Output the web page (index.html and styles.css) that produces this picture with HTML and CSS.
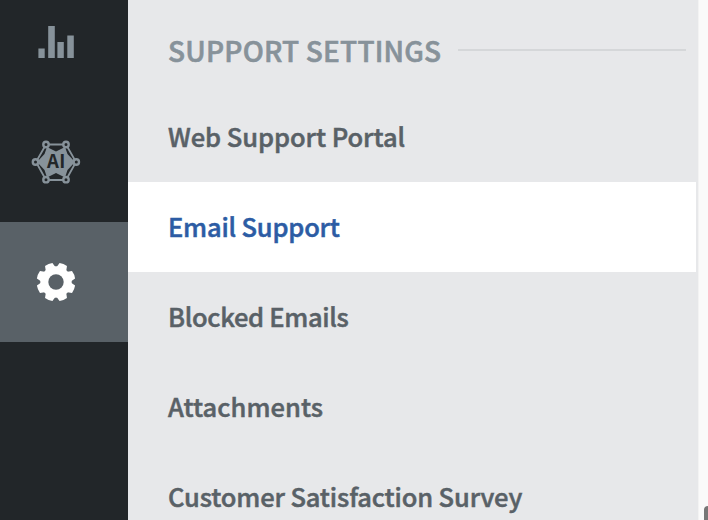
FILE: index.html
```html
<!DOCTYPE html>
<html lang="en">
<head>
<meta charset="utf-8">
<title>Support Settings</title>
<link rel="stylesheet" href="styles.css">
</head>
<body>
<div class="app">
  <nav class="rail">
    <a class="rail-item reports"><svg width="112" height="102" viewBox="0 0 112 102"><path d="M38.400 48.400h6.300V58h-6.300zM48.200 26h6.600v32h-6.600zM57.400 42h6.400v16h-6.400zM67.300 35.500h6.500V58h-6.500z" fill="#87929a"/></svg></a>
    <a class="rail-item ai"><svg width="112" height="120" viewBox="0 102 112 120">
      <path d="M46 144.5H66L76 162 66 180H46L36 162Z" fill="none" stroke="#87929a" stroke-width="1.800"/>
      <path d="M47 147L56 151.500 65 147 67.500 154 75 162 67.500 170 65 177.500 56 173 47 177.500 44.500 170 37 162 44.500 154Z" fill="#87929a"/>
      <g fill="#222629" stroke="#87929a" stroke-width="2.400"><circle cx="46" cy="144.500" r="2.700"/><circle cx="66" cy="144.500" r="2.700"/><circle cx="35.500" cy="162" r="2.700"/><circle cx="76.300" cy="162" r="2.700"/><circle cx="46" cy="179.700" r="2.700"/><circle cx="66" cy="179.700" r="2.700"/></g>
      <text class="ai-label" x="56.500" y="168" text-anchor="middle">AI</text>
    </svg></a>
    <a class="rail-item active"><svg width="112" height="120" viewBox="-56 -60 112 120">
      <g fill="#fff"><circle r="15.700"/><g id="teeth"><path id="tooth" d="M-5.500-13L-4-19Q0-20 4-19L5.500-13V13L4 19Q0 20-4 19L-5.500 13Z" transform="rotate(22.500)"/><use href="#tooth" transform="rotate(45)"/></g><use href="#teeth" transform="rotate(90)"/></g>
      <circle r="7.700" fill="#596167"/>
    </svg></a>
  </nav>
  <main class="menu">
    <h1 class="heading"><span>SUPPORT SETTINGS</span></h1>
    <a class="item"><span class="web">Web Support Portal</span></a>
    <a class="item selected"><span class="email">Email Support</span></a>
    <a class="item"><span class="blocked">Blocked Emails</span></a>
    <a class="item"><span class="attach">Attachments</span></a>
    <a class="item"><span class="survey">Customer Satisfaction Survey</span></a>
  </main>
  <aside class="edge"><i class="thumb"></i></aside>
</div>
</body>
</html>
```
FILE: styles.css
```css
* { box-sizing: border-box; }
body { margin: 0; font-family: "Noto Sans CJK SC", "Noto Sans", sans-serif; }
.app { display: flex; width: 708px; height: 520px; overflow: hidden; background: #fafafa; }
.rail { width: 128px; background: #222629; }
.rail-item { display: block; height: 120px; }
.rail-item svg { display: block; }
.reports { height: 102px; }
.active { background: #596167; }
.ai-label { font: bold 18.5px "Noto Sans CJK SC", sans-serif; letter-spacing: 0.5px; fill: #222629; }
.menu { width: 570px; padding-right: 2px; background: #e7e8ea; }
.heading { display: flex; align-items: center; height: 92px; margin: 0; padding: 8px 10px 0 40px; color: #87929a; font-size: 28px; font-weight: 500; line-height: 40px; letter-spacing: 0.2px; white-space: nowrap; -webkit-text-stroke: 0.6px; }
.heading::after { content: ""; flex: 1; height: 2px; margin: 0 0 0 17px; background: #d5d7d9; }
.item { display: flex; align-items: center; height: 90px; padding: 0 0 2px 40px; color: #596167; font-size: 25.5px; font-weight: 500; line-height: 40px; white-space: nowrap; -webkit-text-stroke: 0.5px; }
.selected { background: #fff; color: #2c5ca4; }
.web { letter-spacing: -0.06px; }
.email { letter-spacing: -0.2px; }
.blocked { letter-spacing: -0.32px; }
.attach { letter-spacing: 0.05px; }
.survey { letter-spacing: -0.14px; }
.edge { display: flex; flex: 1; align-items: flex-end; justify-content: flex-end; border-left: 1px solid #f3f3f3; }
.thumb { width: 4px; height: 14px; border-radius: 4px 0 0; background: #777; }
```
